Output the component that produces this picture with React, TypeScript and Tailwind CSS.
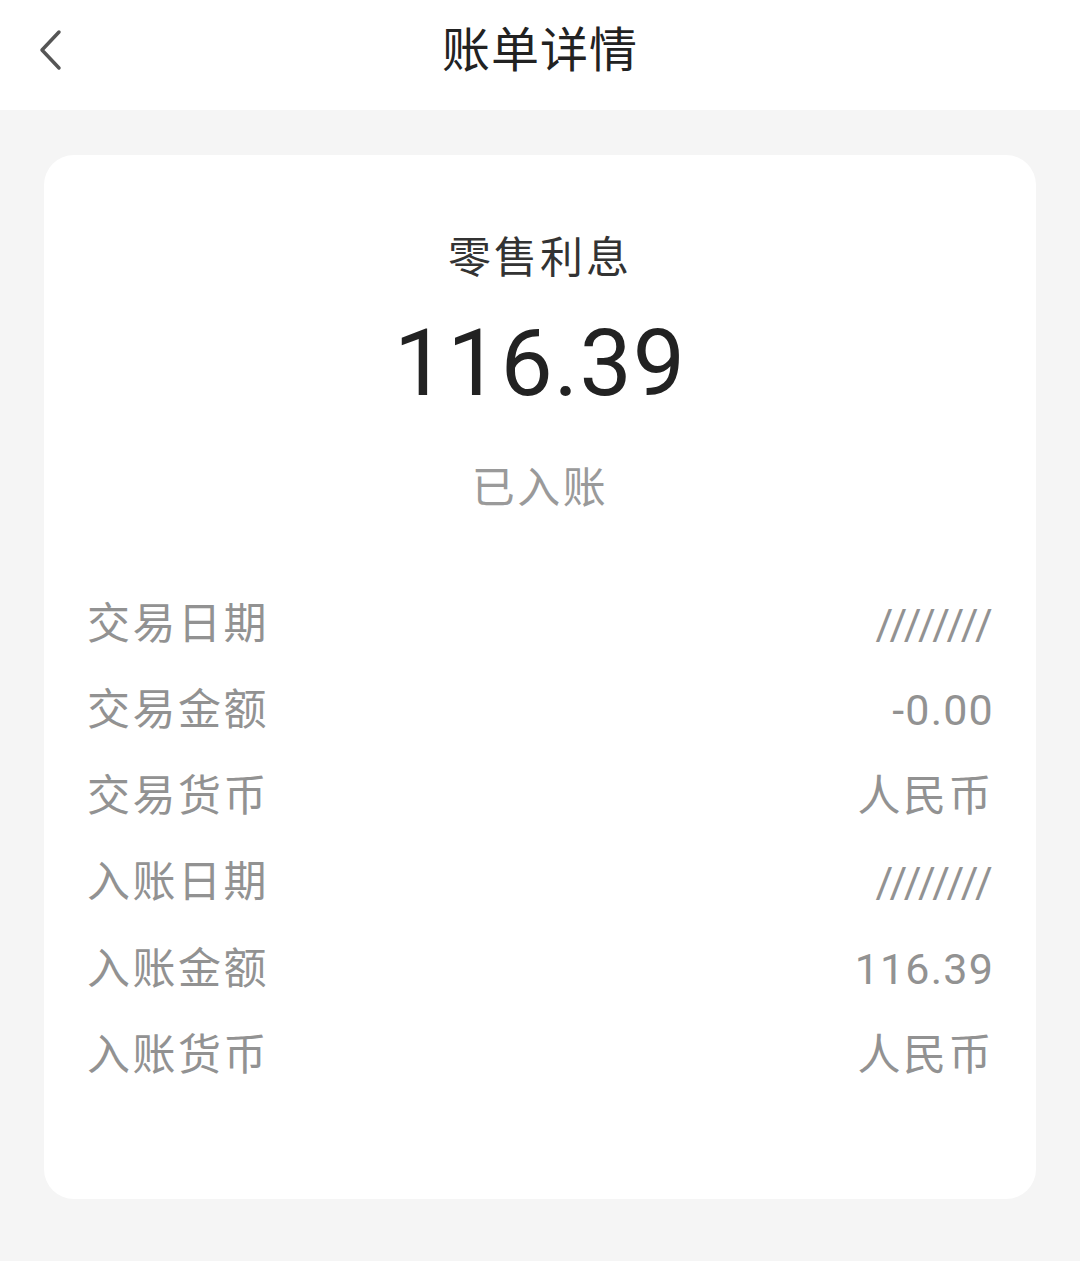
const rows = [
  { label: "交易日期", value: "////////", cjk: false },
  { label: "交易金额", value: "-0.00", cjk: false },
  { label: "交易货币", value: "人民币", cjk: true },
  { label: "入账日期", value: "////////", cjk: false },
  { label: "入账金额", value: "116.39", cjk: false },
  { label: "入账货币", value: "人民币", cjk: true },
];

export default function App() {
  return (
    <div
      className="w-[1080px] h-[1261px] bg-[#f5f5f5] overflow-hidden"
      style={{ fontFamily: 'Roboto, "Noto Sans CJK SC", sans-serif' }}
    >
      <header className="relative h-[110px] bg-white flex items-center justify-center">
        <svg className="absolute left-0 top-0" width="80" height="100" viewBox="0 0 80 100">
          <polyline
            points="59,32 42,50 59,68"
            fill="none"
            stroke="#555"
            strokeWidth="3.5"
            strokeLinecap="round"
            strokeLinejoin="round"
          />
        </svg>
        <h1 className="text-[48px] leading-[56px] tracking-[1px] text-[#222] -mt-[8px]">账单详情</h1>
      </header>

      <div className="mx-[44px] mt-[45px] bg-white rounded-[30px] px-[44px] pt-[80px] pb-[101px]">
        <div className="text-center text-[43px] leading-[46px] tracking-[3px] text-[#333]">零售利息</div>
        <div className="mt-[27px] text-center text-[93px] leading-[112px] tracking-[1px] text-[#222]">116.39</div>
        <div className="mt-[45px] text-center text-[43px] leading-[46px] tracking-[2.5px] text-[#9a9a9a]">已入账</div>

        <div className="mt-[70px] flex flex-col">
          {rows.map((row) => (
            <div
              key={row.label}
              className="h-[86.2px] flex items-center justify-between text-[43px] text-[#929292]"
            >
              <span className="tracking-[2.5px] -ml-[1px]">{row.label}</span>
              <span className={row.cjk ? "tracking-[2.5px] -mr-[2px]" : "tracking-[1.2px] -mr-[2px]"}>
                {row.value}
              </span>
            </div>
          ))}
        </div>
      </div>
    </div>
  );
}
